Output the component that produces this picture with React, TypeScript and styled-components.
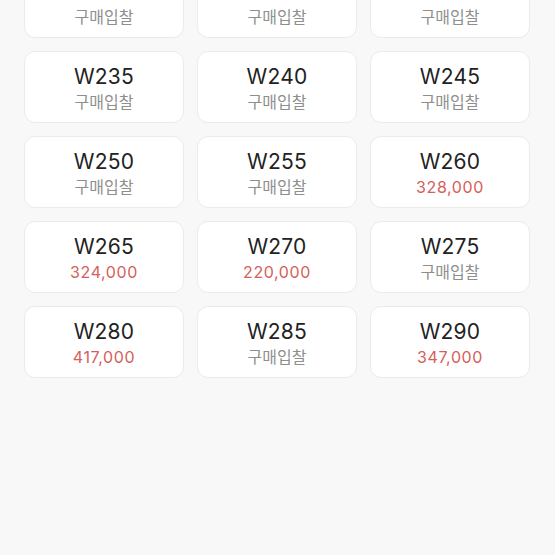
import styled, { createGlobalStyle } from 'styled-components';

const GlobalStyle = createGlobalStyle`
  html, body {
    margin: 0;
    padding: 0;
    background: #f8f8f8;
    overflow: hidden;
  }
  body {
    font-family: Inter, "Noto Sans CJK KR", "Noto Sans", sans-serif;
    -webkit-font-smoothing: antialiased;
  }
`;

const Page = styled.div`
  width: 555px;
  height: 555px;
  background: #f8f8f8;
  overflow: hidden;
`;

const SizeGrid = styled.ul`
  list-style: none;
  margin: -34px 0 0;
  padding: 0 25px 0 24px;
  display: grid;
  grid-template-columns: repeat(3, 160px);
  column-gap: 13px;
  row-gap: 13px;
`;

const SizeCard = styled.li`
  box-sizing: border-box;
  height: 72px;
  background: #fff;
  border: 1px solid #ebebeb;
  border-radius: 11px;
  display: flex;
  flex-direction: column;
  align-items: center;
  justify-content: center;
  padding-top: 2px;
`;

const SizeLabel = styled.span`
  font-size: 21px;
  line-height: 24px;
  color: #222;
  letter-spacing: 0.2px;
`;

const Price = styled.span<{ $bid?: boolean }>`
  font-size: 16px;
  line-height: 20px;
  margin-top: 3px;
  letter-spacing: ${(p) => (p.$bid ? '0' : '0.6px')};
  color: ${(p) => (p.$bid ? '#8e8e8e' : '#d4605b')};
`;

interface SizeItem {
  size: string;
  price?: string;
}

const items: Array<SizeItem> = [
  { size: 'W220' },
  { size: 'W225' },
  { size: 'W230' },
  { size: 'W235' },
  { size: 'W240' },
  { size: 'W245' },
  { size: 'W250' },
  { size: 'W255' },
  { size: 'W260', price: '328,000' },
  { size: 'W265', price: '324,000' },
  { size: 'W270', price: '220,000' },
  { size: 'W275' },
  { size: 'W280', price: '417,000' },
  { size: 'W285' },
  { size: 'W290', price: '347,000' },
];

const App = () => {
  return (
    <>
      <GlobalStyle />
      <Page>
        <SizeGrid>
          {items.map((item) => (
            <SizeCard key={item.size}>
              <SizeLabel>{item.size}</SizeLabel>
              {item.price ? (
                <Price>{item.price}</Price>
              ) : (
                <Price $bid>구매입찰</Price>
              )}
            </SizeCard>
          ))}
        </SizeGrid>
      </Page>
    </>
  );
};

export default App;
